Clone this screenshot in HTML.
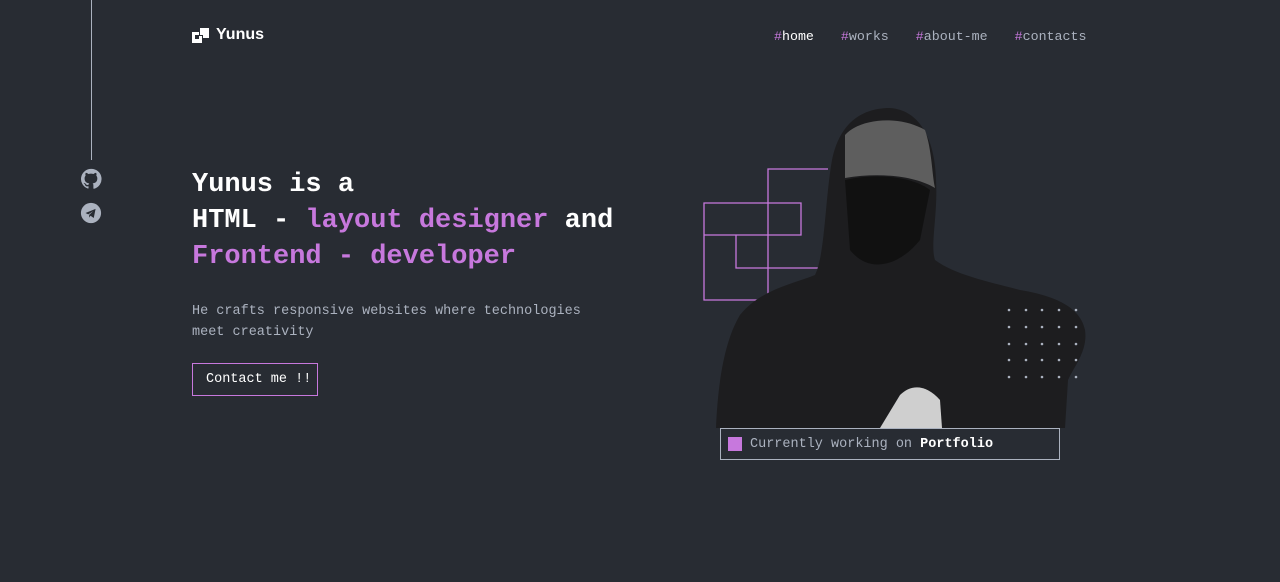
<!DOCTYPE html>
<html><head><meta charset="utf-8"><style>
*{margin:0;padding:0;box-sizing:border-box}
body{width:1280px;height:582px;background:#282c33;font-family:"Liberation Mono",monospace;color:#abb2bf;position:relative;overflow:hidden}
.a{position:absolute}
.p{color:#c778dd}
nav{position:absolute;top:29px;left:774px;font-size:13.3px;white-space:pre}
nav i{font-style:normal;margin-left:27px}
h1{position:absolute;left:192px;top:167px;font-size:27px;line-height:36px;color:#fff;font-weight:bold;white-space:pre}
</style></head><body>
<div class="a" style="left:91px;top:0;width:1px;height:160px;background:#abb2bf"></div>
<svg class="a" style="left:80px;top:168px" width="22" height="22" viewBox="0 0 24 24"><path fill="#abb2bf" d="M12 1a11 11 0 0 0-3.5 21.4c.6.1.8-.2.8-.5v-2c-3.1.7-3.7-1.4-3.7-1.4-.5-1.3-1.2-1.6-1.2-1.6-1-.7.1-.7.1-.7 1.1.1 1.7 1.1 1.7 1.1 1 1.7 2.6 1.2 3.2.9.1-.7.4-1.2.7-1.5-2.5-.3-5.1-1.2-5.1-5.4 0-1.2.4-2.2 1.1-3-.1-.3-.5-1.4.1-2.9 0 0 .9-.3 3 1.1a10.500 10.500 0 0 1 5.5 0c2.1-1.4 3-1.100 3-1.100.6 1.500.2 2.600.1 2.900.7.8 1.1 1.8 1.1 3 0 4.200-2.600 5.100-5.100 5.400.4.4.8 1.100.8 2.200v3.200c0 .3.2.7.8.5A11 11 0 0 0 12 1z"/></svg>
<svg class="a" style="left:80px;top:202px" width="22" height="22" viewBox="0 0 24 24"><circle cx="12" cy="12" r="11" fill="#abb2bf"/><path fill="#282c33" d="M6 12l11-4.5-2 10-3.5-2.5-1.5 2v-3l4.5-4-5.5 3.500z"/></svg>
<svg class="a" style="left:192px;top:28px" width="17" height="16" viewBox="0 0 17 16"><path fill="#fff" d="M0 4h7v4h3v7H0z M8 0h9v10h-6V7H8z"/><path fill="#282c33" d="M3 7h4v4H3z"/></svg>
<div class="a" style="left:216px;top:26px;font-family:'Liberation Sans',sans-serif;font-weight:bold;font-size:16px;color:#fff">Yunus</div>
<nav><span class="p">#</span><span style="color:#fff">home</span><i><span class="p">#</span>works</i><i><span class="p">#</span>about-me</i><i><span class="p">#</span>contacts</i></nav>
<h1>Yunus is a
HTML - <span class="p">layout designer</span> and
<span class="p">Frontend - developer</span></h1>
<div class="a" style="left:192px;top:301px;font-size:13.5px;line-height:21px;width:400px">He crafts responsive websites where technologies meet creativity</div>
<div class="a" style="left:192px;top:363px;width:126px;height:33px;border:1px solid #c778dd;color:#fff;font-size:13.5px;line-height:31px;padding-left:13px">Contact me !!</div>
<svg class="a" style="left:0;top:0" width="1280" height="582">
<g fill="none" stroke="#c778dd" stroke-width="1.3">
<path d="M704 203h97v32h-97z M704 235v65h64 M768 300V169h60 M736 235v33h90"/>
</g>
<path fill="#1d1d1f" d="M716 428C718 380 725 340 740 315C760 290 790 285 815 275C825 255 825 200 832 160C840 120 865 108 890 108C920 110 935 140 936 180C938 215 930 245 935 260C955 275 990 282 1020 290C1050 295 1080 305 1085 330C1088 350 1075 365 1068 380L1065 428z"/>
<path fill="#111" d="M845 180C880 172 915 178 930 190L920 240C900 265 870 275 850 250z"/>
<path fill="#5e5e5e" d="M845 135C860 118 900 115 925 130C932 150 932 175 935 188C915 176 880 172 845 178z"/>
<path fill="#cfcfcf" d="M880 428L900 395C910 385 925 383 940 400L942 428z"/>
<g fill="#abb2bf">
<circle cx="1009" cy="310" r="1.3"/><circle cx="1026" cy="310" r="1.3"/><circle cx="1042" cy="310" r="1.3"/><circle cx="1059" cy="310" r="1.3"/><circle cx="1076" cy="310" r="1.3"/>
<circle cx="1009" cy="327" r="1.3"/><circle cx="1026" cy="327" r="1.3"/><circle cx="1042" cy="327" r="1.3"/><circle cx="1059" cy="327" r="1.3"/><circle cx="1076" cy="327" r="1.3"/>
<circle cx="1009" cy="344" r="1.3"/><circle cx="1026" cy="344" r="1.3"/><circle cx="1042" cy="344" r="1.3"/><circle cx="1059" cy="344" r="1.3"/><circle cx="1076" cy="344" r="1.3"/>
<circle cx="1009" cy="360" r="1.3"/><circle cx="1026" cy="360" r="1.3"/><circle cx="1042" cy="360" r="1.3"/><circle cx="1059" cy="360" r="1.3"/><circle cx="1076" cy="360" r="1.3"/>
<circle cx="1009" cy="377" r="1.3"/><circle cx="1026" cy="377" r="1.3"/><circle cx="1042" cy="377" r="1.3"/><circle cx="1059" cy="377" r="1.3"/><circle cx="1076" cy="377" r="1.3"/>
</g>
</svg>
<div class="a" style="left:720px;top:428px;width:340px;height:32px;border:1px solid #abb2bf;background:#282c33;font-size:13.5px;line-height:31px;padding-left:29px;white-space:nowrap">
<div class="a" style="left:7px;top:8px;width:14px;height:14px;background:#c778dd"></div>Currently working on <b style="color:#fff">Portfolio</b></div>
</body></html>
